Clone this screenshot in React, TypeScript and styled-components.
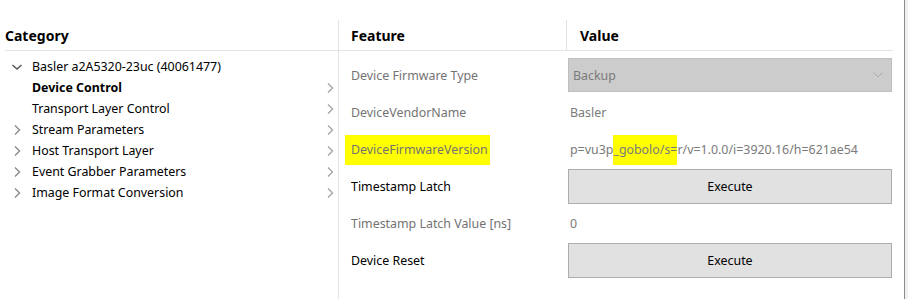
import React from "react";
import styled, { createGlobalStyle } from "styled-components";

const GlobalStyle = createGlobalStyle`
  html, body {
    margin: 0;
    padding: 0;
    background: #fff;
    font-family: "Noto Sans", "Open Sans", sans-serif;
  }
`;

const categories = [
  { name: "Stream Parameters" },
  { name: "Host Transport Layer" },
  { name: "Event Grabber Parameters" },
  { name: "Image Format Conversion" },
];

const Chevron = ({ dir, color }: { dir: "down" | "right"; color: string }) => (
  <svg width="10" height="10" viewBox="0 0 10 10">
    {dir === "down" ? (
      <path d="M0.5 3 L5 7 L9.5 3" fill="none" stroke={color} strokeWidth="1.4" />
    ) : (
      <path d="M3 0.5 L7.5 5 L3 9.5" fill="none" stroke={color} strokeWidth="1.4" />
    )}
  </svg>
);

const App = () => {
  return (
    <>
      <GlobalStyle />
      <Window>
        <CategoryPane>
          <PaneHeader>Category</PaneHeader>
          <Tree>
            <TreeRow>
              <Toggle>
                <Chevron dir="down" color="#555" />
              </Toggle>
              <TreeLabel>Basler a2A5320-23uc (40061477)</TreeLabel>
            </TreeRow>
            <TreeRow>
              <Toggle />
              <TreeLabel $bold>Device Control</TreeLabel>
              <Arrow>
                <Chevron dir="right" color="#a6a6a6" />
              </Arrow>
            </TreeRow>
            <TreeRow>
              <Toggle />
              <TreeLabel>Transport Layer Control</TreeLabel>
              <Arrow>
                <Chevron dir="right" color="#a6a6a6" />
              </Arrow>
            </TreeRow>
            {categories.map((c) => (
              <TreeRow key={c.name}>
                <Toggle>
                  <Chevron dir="right" color="#8a8a8a" />
                </Toggle>
                <TreeLabel>{c.name}</TreeLabel>
                <Arrow>
                  <Chevron dir="right" color="#a6a6a6" />
                </Arrow>
              </TreeRow>
            ))}
          </Tree>
        </CategoryPane>

        <FeaturePane>
          <HeaderRow>
            <HeadCell>Feature</HeadCell>
            <HeadCell $divider>Value</HeadCell>
          </HeaderRow>
          <Grid>
            <NameCell $muted>Device Firmware Type</NameCell>
            <ValueCell>
              <Select>
                <span>Backup</span>
                <svg width="10" height="6" viewBox="0 0 10 6">
                  <path d="M0.5 0.5 L5 5 L9.5 0.5" fill="none" stroke="#acacac" strokeWidth="1" />
                </svg>
              </Select>
            </ValueCell>

            <NameCell $muted>DeviceVendorName</NameCell>
            <ValueCell>
              <ValueText>Basler</ValueText>
            </ValueCell>

            <NameCell $muted>
              <Marker>DeviceFirmwareVersion</Marker>
            </NameCell>
            <ValueCell>
              <ValueText>
                p=vu3p<Marker $tight>_gobolo/s=</Marker>r/v=1.0.0/i=3920.16/h=621ae54
              </ValueText>
            </ValueCell>

            <NameCell>Timestamp Latch</NameCell>
            <ValueCell>
              <Button>Execute</Button>
            </ValueCell>

            <NameCell $muted>Timestamp Latch Value [ns]</NameCell>
            <ValueCell>
              <ValueText>0</ValueText>
            </ValueCell>

            <NameCell>Device Reset</NameCell>
            <ValueCell>
              <Button>Execute</Button>
            </ValueCell>
          </Grid>
        </FeaturePane>
        <Frame />
      </Window>
    </>
  );
};

const Window = styled.div`
  display: flex;
  width: 908px;
  height: 299px;
  background: #fff;
  overflow: hidden;
`;

const CategoryPane = styled.div`
  flex: 0 0 338px;
  box-sizing: border-box;
  padding-left: 5px;
  display: flex;
  flex-direction: column;
`;

const PaneHeader = styled.div`
  margin-top: 20px;
  height: 31px;
  box-sizing: border-box;
  border-bottom: 1px solid #e3e3e3;
  font-size: 14px;
  font-weight: 700;
  color: #000;
  display: flex;
  align-items: center;
  padding-top: 1px;
`;

const Tree = styled.div`
  padding-top: 5px;
  display: flex;
  flex-direction: column;
`;

const TreeRow = styled.div`
  height: 21px;
  display: flex;
  align-items: center;
`;

const Toggle = styled.div`
  width: 27px;
  padding-left: 7px;
  box-sizing: border-box;
  display: flex;
  align-items: center;
`;

const TreeLabel = styled.div<{ $bold?: boolean }>`
  flex: 1;
  font-size: 12.4px;
  color: #000;
  font-weight: ${(p) => (p.$bold ? 700 : 400)};
  white-space: nowrap;
`;

const Arrow = styled.div`
  width: 13px;
  display: flex;
  align-items: center;
`;

const FeaturePane = styled.div`
  flex: 0 0 566px;
  box-sizing: border-box;
  border-left: 1px solid #e3e3e3;
  margin-top: 20px;
`;

const HeaderRow = styled.div`
  display: grid;
  grid-template-columns: 227px 327px;
  height: 31px;
`;

const Grid = styled.div`
  display: grid;
  grid-template-columns: 227px 327px;
  grid-auto-rows: 37px;
  padding-top: 6px;
`;

const HeadCell = styled.div<{ $divider?: boolean }>`
  display: flex;
  align-items: center;
  padding-left: ${(p) => (p.$divider ? "13px" : "12px")};
  padding-top: 1px;
  border-bottom: 1px solid #e3e3e3;
  border-left: ${(p) => (p.$divider ? "1px solid #e3e3e3" : "none")};
  font-size: 14px;
  font-weight: 700;
  color: #000;
`;

const NameCell = styled.div<{ $muted?: boolean }>`
  display: flex;
  align-items: center;
  padding-left: 12px;
  font-size: 12.4px;
  color: ${(p) => (p.$muted ? "#737373" : "#000")};
  white-space: nowrap;
`;

const ValueCell = styled.div`
  display: flex;
  align-items: center;
  padding-left: 2px;
  padding-right: 1px;
`;

const ValueText = styled.span`
  padding-left: 2px;
  font-size: 12.4px;
  color: #7a7a7a;
  white-space: nowrap;
`;

const Marker = styled.span<{ $tight?: boolean }>`
  background: #ffff00;
  padding: ${(p) => (p.$tight ? "6px 0 7px 0" : "6px 2px 7px 6px")};
  margin-left: ${(p) => (p.$tight ? "0" : "-6px")};
`;

const Select = styled.div`
  flex: 1;
  height: 34px;
  box-sizing: border-box;
  background: #cccccc;
  border: 1px solid #c0c0c0;
  display: flex;
  align-items: center;
  justify-content: space-between;
  padding: 0 8px 0 4px;
  font-size: 12.4px;
  color: #7a7a7a;
  margin-top: -1px;
`;

const Button = styled.div`
  flex: 1;
  height: 35px;
  box-sizing: border-box;
  background: #e1e1e1;
  border: 1px solid #adadad;
  display: flex;
  align-items: center;
  justify-content: center;
  font-size: 12.4px;
  color: #000;
`;

const Frame = styled.div`
  flex: 0 0 4px;
  box-sizing: border-box;
  border-left: 1px solid #8c8c8c;
  background: #f0f0f0;
`;

export default App;
